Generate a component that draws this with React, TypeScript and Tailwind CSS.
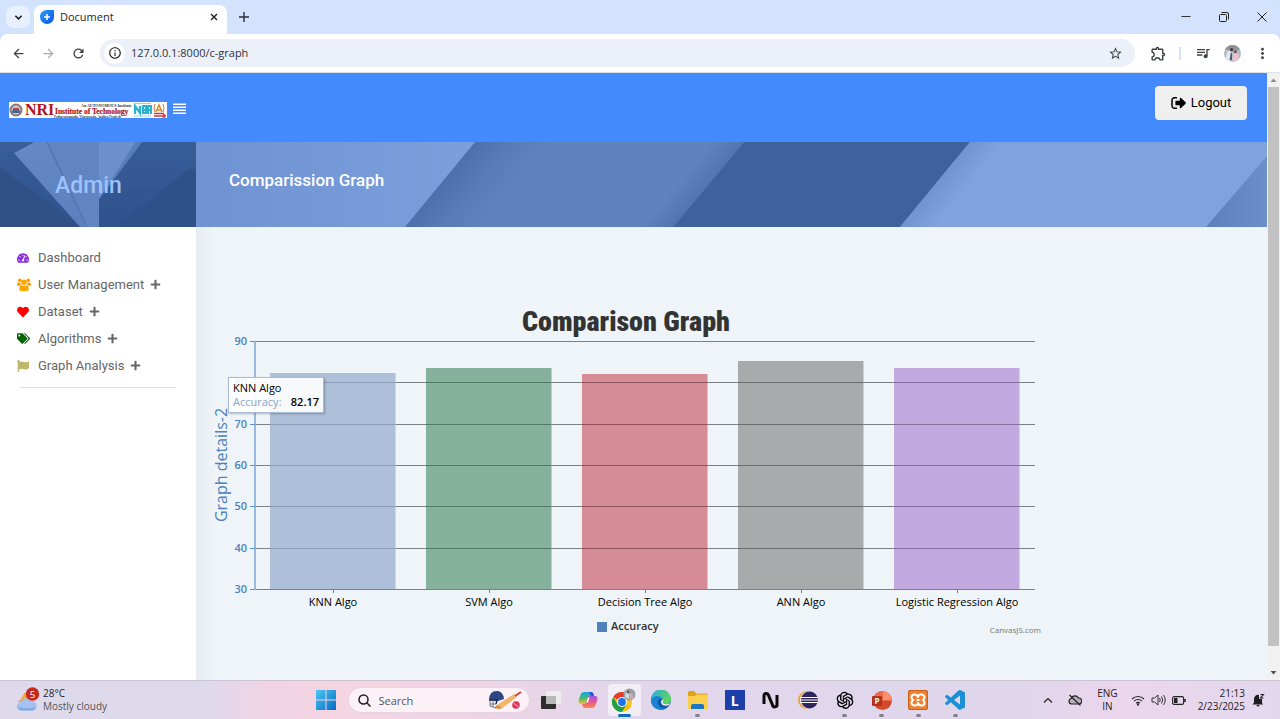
import type { ReactNode } from "react";
import {
  FaFlag,
  FaHeart,
  FaPlus,
  FaTachometerAlt,
  FaTags,
} from "react-icons/fa";
import {
  MdArrowBack,
  MdArrowForward,
  MdOutlineExtension,
  MdMoreVert,
  MdOutlineInfo,
  MdOutlineQueueMusic,
  MdRefresh,
  MdStarBorder,
} from "react-icons/md";
import { AiOutlineOpenAI } from "react-icons/ai";
import { BiLogoVisualStudio } from "react-icons/bi";

/* ---------- browser window ---------- */

function TabStrip() {
  return (
    <div className="flex h-[34px] shrink-0 items-stretch bg-[#d3e3fd] pl-[6px]">
      <button aria-label="Search tabs" className="mt-[6px] flex h-[22px] w-[24px] items-center justify-center rounded-lg bg-[#e9f0fd]">
        <svg viewBox="0 0 10 10" className="h-[9px] w-[9px]" fill="none" stroke="#1f1f1f" strokeWidth="1.8">
          <path d="M1.5 3 5 6.5 8.5 3" />
        </svg>
      </button>
      <div className="ml-1 mt-[5px] flex w-[193px] items-center rounded-t-lg bg-white pb-[5px] pl-[6px] pr-[9px]">
        <svg viewBox="0 0 14 14" className="h-[14px] w-[14px]">
          <defs>
            <linearGradient id="fav" x1="0" y1="0" x2="1" y2="1">
              <stop offset="0" stopColor="#35a0fb" />
              <stop offset="0.5" stopColor="#1877f2" />
              <stop offset="1" stopColor="#0b54d8" />
            </linearGradient>
          </defs>
          <path d="M6 0H14V7A7 7 0 0 1 7 14A7 7 0 0 1 0 7A6.500 6.500 0 0 1 6 0Z" fill="url(#fav)" />
          <path d="M7 4v6M4 7h6" stroke="#fff" strokeWidth="1.6" />
        </svg>
        <span className="ml-[6px] flex-1 text-[11px] text-[#1f1f1f]">Document</span>
        <button aria-label="Close tab">
          <svg viewBox="0 0 8 8" className="h-[8px] w-[8px]" stroke="#1f1f1f" strokeWidth="1.4">
            <path d="M1 1l6 6M7 1l-6 6" />
          </svg>
        </button>
      </div>
      <button aria-label="New tab" className="ml-[12px]">
        <svg viewBox="0 0 10 10" className="h-[10px] w-[10px]" stroke="#2b2f33" strokeWidth="1.4">
          <path d="M5 0v10M0 5h10" />
        </svg>
      </button>
      <div className="ml-auto flex items-center gap-[28px] pr-[13px]">
        <button aria-label="Minimize">
          <svg viewBox="0 0 10 10" className="h-[10px] w-[10px]" stroke="#333" fill="none">
            <path d="M0.5 4.5h9" />
          </svg>
        </button>
        <button aria-label="Restore">
          <svg viewBox="0 0 10 10" className="h-[10px] w-[10px]" stroke="#222" fill="none">
            <rect x="0.5" y="2.5" width="7" height="7" rx="1" />
            <path d="M2.5 0.5H8a1.5 1.5 0 0 1 1.5 1.5v5.500" />
          </svg>
        </button>
        <button aria-label="Close window">
          <svg viewBox="0 0 10 10" className="h-[10px] w-[10px]" stroke="#222">
            <path d="M0.500 0.500l9 9M9.500 0.500l-9 9" />
          </svg>
        </button>
      </div>
    </div>
  );
}

function Toolbar() {
  return (
    <div className="shrink-0 bg-[#d3e3fd]">
      <div className="flex h-[39px] items-center rounded-t-lg border-b border-[#dfe3e8] bg-white pl-[11px] pr-[9px] text-[#3c4043]">
        <button aria-label="Back"><MdArrowBack className="h-[15px] w-[15px]" /></button>
        <button aria-label="Forward" className="ml-[15px] text-[#a8abae]"><MdArrowForward className="h-[15px] w-[15px]" /></button>
        <button aria-label="Reload" className="ml-[15px]"><MdRefresh className="h-[15px] w-[15px]" /></button>
        <div className="ml-[14px] flex h-[28px] flex-1 items-center rounded-full bg-[#ebf0f9] pl-[4px] pr-[12px]">
          <button aria-label="Site information" className="flex h-[21px] w-[21px] items-center justify-center rounded-full bg-white text-[#1f1f1f]">
            <MdOutlineInfo className="h-[14px] w-[14px]" />
          </button>
          <input
            aria-label="Address"
            defaultValue="127.0.0.1:8000/c-graph"
            className="ml-[6px] min-w-0 flex-1 bg-transparent text-[11px] text-[#303337] outline-none"
          />
          <button aria-label="Bookmark this page"><MdStarBorder className="h-[15px] w-[15px]" /></button>
        </div>
        <button aria-label="Extensions" className="ml-[15px]"><MdOutlineExtension className="h-[17px] w-[17px]" /></button>
        <span className="ml-[12px] h-[13px] w-[2px] bg-[#d3e3fd]" />
        <button aria-label="Media" className="ml-[14px]"><MdOutlineQueueMusic className="h-[16px] w-[16px]" /></button>
        <button aria-label="Profile" className="ml-[13px]">
          <svg viewBox="0 0 18 18" className="h-[17px] w-[17px]">
            <clipPath id="avatar"><circle cx="9" cy="9" r="9" /></clipPath>
            <g clipPath="url(#avatar)">
              <rect width="18" height="18" fill="#b4bac4" />
              <path d="M0 0h18v5H0z" fill="#8b8f98" />
              <path d="M4 6l4 1 1 7-5 5H0z" fill="#e3e8f0" />
              <circle cx="8" cy="5" r="1.800" fill="#4a3b3a" />
              <path d="M7 9l1.500-1v8H6z" fill="#4a5570" />
              <circle cx="12" cy="7" r="1.700" fill="#6b5552" />
              <path d="M10 9h5l2 9H9z" fill="#edc0cf" />
            </g>
          </svg>
        </button>
        <button aria-label="Menu" className="ml-[13px]"><MdMoreVert className="h-[17px] w-[17px]" /></button>
      </div>
    </div>
  );
}

/* ---------- admin page ---------- */

function CollegeLogo() {
  return (
    <svg viewBox="0 0 158 16" className="h-[16px] w-[158px]" role="img" aria-label="NRI Institute of Technology">
      <rect width="158" height="16" fill="#fff" />
      <circle cx="7" cy="8" r="6.500" fill="#8d7770" />
      <circle cx="7" cy="8" r="4.500" fill="#c3cbd0" />
      <path d="M3 9q4-5 8 0v2H3z" fill="#45698f" />
      <path d="M4 6h6v2H4z" fill="#c8403b" />
      <g fontFamily="Liberation Serif, serif" fontWeight="bold">
        <text x="16" y="13" fontSize="16" fill="#b3131b">NRI</text>
        <text x="46" y="12" fontSize="7.500" fill="#b3131b" stroke="#b3131b" strokeWidth="0.200">Institute of Technology</text>
        <text x="72" y="4.500" fontSize="4" fill="#333">An AUTONOMOUS Institute</text>
        <text x="45" y="15.500" fontSize="3.300" fill="#333">Pothavarappadu, Vijayawada, Andhra Pradesh</text>
      </g>
      <rect x="124" y="1" width="19" height="14" fill="#fff" />
      <g fill="none" stroke="#29b3d2" strokeWidth="2.200">
        <path d="M126 12V4l5 7V4M134 3v8h3V8h-3V4h3v4M139 12V4h3v8M139 8h3" />
      </g>
      <path d="M125 1.500h17M125 14h17" stroke="#8fd5e5" />
      <rect x="144" y="0" width="14" height="16" fill="#fff" />
      <path d="M147 10l3-7 3 7M148 8h4" fill="none" stroke="#d98b2b" strokeWidth="1.500" />
      <path d="M146 2q-2 4 0 8M154 2q2 4 0 8" fill="none" stroke="#dc6c45" />
      <path d="M145 11.500h10M145 14h8" stroke="#cc3a3a" strokeWidth="1.500" />
      <circle cx="155" cy="14" r="2" fill="#dc4646" />
    </svg>
  );
}

function LogoutIcon() {
  return (
    <svg viewBox="0 0 15 14" className="h-[14px] w-[15px]">
      <path d="M6 1.800H3.500A2.500 2.500 0 0 0 1 4.300v5.400a2.500 2.500 0 0 0 2.500 2.500H6" fill="none" stroke="#000" strokeWidth="1.500" />
      <path d="M5 4.800h3.800V2.300q.3-.9 1.200-.2l4.600 4.200q.5.700 0 1.400L10 11.900q-.9.700-1.200-.2V9.200H5q-.6 0-.6-.6V5.400q0-.6.600-.6z" fill="#000" />
    </svg>
  );
}

function UsersIcon() {
  return (
    <svg viewBox="0 0 14 13" className="h-[13px] w-[14px]" fill="#ffa500">
      <circle cx="2.800" cy="2.400" r="1.900" />
      <circle cx="11.200" cy="2.400" r="1.900" />
      <circle cx="7" cy="4.300" r="2.700" />
      <path d="M0 7V5.500Q.3 4.300 1.200 4.600q1.300.7 2.600.3 0 1 .6 1.900-1.300.1-2.200 1.200H1.200Q0 8 0 7z" />
      <path d="M14 7V5.500q-.3-1.200-1.200-.9-1.300.7-2.600.3 0 1-.6 1.900 1.300.1 2.200 1.200h1q1.200 0 1.200-1z" />
      <path d="M2.200 11q0-4 2.600-3.800Q7 8.800 9.200 7.200 11.800 7 11.800 11q0 2-2 2H4.200q-2 0-2-2z" />
    </svg>
  );
}

function PageHeader() {
  return (
    <header className="flex h-[69px] shrink-0 items-start justify-between bg-[#448aff] pl-[9px] pr-[20px] font-['Roboto',sans-serif]">
      <div className="flex h-[73px] items-center gap-[6px]">
        <CollegeLogo />
        <button aria-label="Toggle menu">
          <svg viewBox="0 0 13 13" className="h-[13px] w-[13px]" stroke="#fff" strokeWidth="1.500">
            <path d="M0 1.200h13M0 4.200h13M0 7.200h13M0 10.200h13" />
          </svg>
        </button>
      </div>
      <button className="mt-[13px] flex h-[34px] w-[92px] items-center justify-center gap-[5px] rounded bg-[#efefef] text-[13px] text-black">
        <LogoutIcon />
        Logout
      </button>
    </header>
  );
}

type MenuItem = { label: string; icon: ReactNode; expandable: boolean };

const menu: MenuItem[] = [
  { label: "Dashboard", icon: <FaTachometerAlt className="h-[12px] w-[12px] text-[#8a2be2]" />, expandable: false },
  { label: "User Management", icon: <UsersIcon />, expandable: true },
  { label: "Dataset", icon: <FaHeart className="h-[12px] w-[12px] text-[#ff0000]" />, expandable: true },
  { label: "Algorithms", icon: <FaTags className="h-[13px] w-[13px] text-[#006400]" />, expandable: true },
  { label: "Graph Analysis", icon: <FaFlag className="h-[12px] w-[12px] text-[#bdb76b]" />, expandable: true },
];

function Sidebar() {
  return (
    <aside className="w-[196px] shrink-0 bg-white font-['Roboto',sans-serif]">
      <div className="relative h-[85px] overflow-hidden bg-[#355891]">
        <svg viewBox="0 0 196 85" preserveAspectRatio="none" className="absolute inset-0 h-full w-full" aria-hidden="true">
          <defs>
            <linearGradient id="sideBase" x1="0" y1="0" x2="0" y2="1">
              <stop offset="0" stopColor="#375d99" />
              <stop offset="1" stopColor="#2e528c" />
            </linearGradient>
            <linearGradient id="sideRay" x1="0" y1="0" x2="0" y2="1">
              <stop offset="0" stopColor="#6489c4" />
              <stop offset="1" stopColor="#5b80bd" />
            </linearGradient>
          </defs>
          <rect width="196" height="85" fill="url(#sideBase)" />
          <path d="M0 25 80 85H0Z" fill="#305086" />
          <path d="M14 11 34 0H142L99 57V85H80Z" fill="url(#sideRay)" />
          <path d="M47 0H99V85H87Z" fill="#6085c1" />
          <path d="M99 0H135L99 57Z" fill="#6b90cb" />
          <path d="M47 0 87 85" stroke="#5075b0" strokeWidth="1.500" />
          <path d="M142 0 99 57 136 0Z" fill="#587eba" />
          <path d="M14 11 34 0H0V8Z" fill="#3b5e98" />
          <path d="M115 85 190 26 196 30V85Z" fill="#2e5189" />
        </svg>
        <div className="relative flex h-full items-center pl-[55px] pt-[3px] text-[23px] font-medium text-[#9dc2ff]">Admin</div>
      </div>
      <nav className="pl-[17px] pr-[20px] pt-[17px]">
        <ul>
          {menu.map((item) => (
            <li key={item.label}>
              <a href="#" className="flex h-[27px] items-center text-[13px] text-[#666]">
                <span className="flex w-[21px] items-center">{item.icon}</span>
                {item.label}
                {item.expandable && <FaPlus className="ml-[6px] h-[11px] w-[11px]" />}
              </a>
            </li>
          ))}
        </ul>
        <hr className="ml-[3px] mt-[8px] border-[#dde2e6]" />
      </nav>
    </aside>
  );
}

function Banner() {
  return (
    <div className="relative h-[85px] overflow-hidden font-['Roboto',sans-serif]">
      <svg viewBox="0 0 1071 85" preserveAspectRatio="none" className="absolute inset-0 h-full w-full" aria-hidden="true">
        <defs>
          <linearGradient id="b1">
            <stop offset="0" stopColor="#6f92d2" />
            <stop offset="0.250" stopColor="#7b9fdb" />
          </linearGradient>
          <linearGradient id="b2" gradientUnits="userSpaceOnUse" x1="244" y1="42" x2="290" y2="80">
            <stop offset="0" stopColor="#4b70ab" />
            <stop offset="0.500" stopColor="#597cb7" />
            <stop offset="1" stopColor="#5f83bd" />
          </linearGradient>
          <linearGradient id="b3" gradientUnits="userSpaceOnUse" x1="739" y1="42" x2="760" y2="59">
            <stop offset="0" stopColor="#7094d0" />
            <stop offset="1" stopColor="#80a3df" />
          </linearGradient>
          <linearGradient id="b4">
            <stop offset="0" stopColor="#5b80bc" />
            <stop offset="1" stopColor="#6b8fca" />
          </linearGradient>
          <linearGradient id="edge" gradientUnits="userSpaceOnUse" x1="494" y1="26" x2="513" y2="42">
            <stop offset="0" stopColor="#4a6ca8" stopOpacity="0" />
            <stop offset="1" stopColor="#4a6ca8" stopOpacity="0.600" />
          </linearGradient>
        </defs>
        <rect width="1071" height="85" fill="url(#b1)" />
        <path d="M279 0H548L477 85H209Z" fill="url(#b2)" />
        <path d="M510 0H548L477 85H439Z" fill="url(#edge)" />
        <path d="M548 0H774L704 85H477Z" fill="#3e629c" />
        <path d="M774 0H1071V85H704Z" fill="url(#b3)" />
        <path d="M1071 14V85H1010Z" fill="url(#b4)" />
      </svg>
      <h1 className="relative pl-[33px] pt-[26px] text-[17px] font-medium leading-[24px] text-white">Comparission Graph</h1>
    </div>
  );
}

type Bar = { label: string; value: number; fill: string; line: string };

const bars: Bar[] = [
  { label: "KNN Algo", value: 82.17, fill: "#aebfd9", line: "#8d9db8" },
  { label: "SVM Algo", value: 83.4, fill: "#86b29d", line: "#4f7d67" },
  { label: "Decision Tree Algo", value: 82.1, fill: "#d58c97", line: "#8f525c" },
  { label: "ANN Algo", value: 85.2, fill: "#a7abab", line: "#6a6e6e" },
  { label: "Logistic Regression Algo", value: 83.4, fill: "#c2aae0", line: "#85709f" },
];

const ticks = [90, 80, 70, 60, 50, 40, 30];
const BASE = 289;
const PLOT_HEIGHT = 248;
const yOf = (v: number) => Math.round(BASE - ((v - 30) * PLOT_HEIGHT) / 60);

function ComparisonChart() {
  return (
    <svg viewBox="0 0 844 340" className="block w-full max-w-[844px] font-['Open_Sans',sans-serif]" role="img" aria-label="Comparison Graph">
      <text x="420" y="31" textAnchor="middle" fontSize="28" fontWeight="900" fill="#333" className="font-['Impact','Roboto_Condensed','Roboto',sans-serif]">
        Comparison Graph
      </text>
      {ticks.map((t) => (
        <g key={t}>
          <path d={`M49 ${yOf(t) + 0.5}H829`} stroke="#7c8184" />
          <path d={`M44 ${yOf(t) + 0.5}h5`} stroke="#5b8fcc" />
          <text x="41" y={yOf(t) + 4} textAnchor="end" fontSize="11" fontWeight="600" fill="#4f81bc">{t}</text>
        </g>
      ))}
      {bars.map((b, i) => {
        const x = 64 + i * 156;
        return (
          <g key={b.label}>
            <rect x={x} y={yOf(b.value)} width="125.500" height={BASE - yOf(b.value)} fill={b.fill} />
            {ticks.filter((t) => t < b.value && t > 30).map((t) => (
              <path key={t} d={`M${x} ${yOf(t) + 0.5}h125.500`} stroke={b.line} />
            ))}
            <path d={`M${x + 63.5} ${BASE}v4`} stroke="#7c8184" />
            <text x={x + 63} y="306" textAnchor="middle" fontSize="11" fontWeight="500" fill="#000">{b.label}</text>
          </g>
        );
      })}
      <path d="M49 41V290" stroke="#7ba6d8" strokeWidth="1.500" />
      <text transform="translate(21 165) rotate(-90)" textAnchor="middle" fontSize="16" fill="#4f81bc">Graph details-2</text>
      <rect x="391" y="322" width="10" height="10" fill="#4f81bc" />
      <text x="405" y="330" fontSize="11" fontWeight="600" fill="#333">Accuracy</text>
      <text x="835" y="333" textAnchor="end" fontSize="8" fill="#777">CanvasJS.com</text>
    </svg>
  );
}

function ChartArea() {
  return (
    <main className="flex-1 bg-gradient-to-r from-[#e7edf0] to-[#eef4f7] to-[20px] pl-[10px] pt-[73px]">
      <div className="relative">
        <ComparisonChart />
        <div className="absolute left-[22px] top-[77px] w-[96px] border border-[#a9bbd6] bg-white/90 px-[4px] py-[3px] font-['Open_Sans',sans-serif] text-[11px] leading-[14px] text-black shadow-[1px_1px_2px_rgba(0,0,0,0.25)]">
          <div className="font-medium">KNN Algo</div>
          <div className="flex justify-between">
            <span className="text-[#8ba3c9]">Accuracy:</span>
            <span className="font-semibold">82.17</span>
          </div>
        </div>
      </div>
    </main>
  );
}

function PageScrollbar() {
  return (
    <div className="flex w-[13px] shrink-0 flex-col items-center bg-[#f1f1f1]" aria-hidden="true">
      <svg viewBox="0 0 13 14" className="h-[14px] w-[13px]"><path d="M3.500 9h6L6.500 5.500z" fill="#8b8b8b" /></svg>
      <div className="w-[11px] flex-1 bg-[#c1c1c1]" />
      <div className="h-[20px]" />
      <svg viewBox="0 0 13 14" className="h-[14px] w-[13px]"><path d="M3.500 5h6L6.500 8.500z" fill="#505050" /></svg>
    </div>
  );
}

/* ---------- taskbar ---------- */

function Chrome() {
  return (
    <svg viewBox="0 0 26 24" className="h-[24px] w-[26px]">
      <circle cx="11" cy="14" r="10" fill="#fbc116" />
      <path d="M11 14 2.300 9A10 10 0 0 1 19.700 9H11z" fill="#e33b2e" />
      <path d="M2.300 9A10 10 0 0 0 11 24L15.500 16.500 11 14 6.700 16.500z" fill="#229f4b" />
      <circle cx="11" cy="14" r="5" fill="#fff" />
      <circle cx="11" cy="14" r="3.900" fill="#1a73e8" />
      <circle cx="18.500" cy="6.500" r="6" fill="#9b9ea3" />
      <path d="M15 3l3 1 0 7-4-2z" fill="#d7dae0" />
      <path d="M18 5l3 0 2 5-4 2z" fill="#c9acb4" />
      <circle cx="17" cy="4" r="1.500" fill="#605a58" />
    </svg>
  );
}

function Copilot() {
  return (
    <svg viewBox="0 0 20 18" className="h-[18px] w-[20px]">
      <defs>
        <linearGradient id="cpA" x1="0" y1="0" x2="0" y2="1">
          <stop offset="0" stopColor="#1aa3ea" />
          <stop offset="0.500" stopColor="#42b86f" />
          <stop offset="1" stopColor="#f2c230" />
        </linearGradient>
        <linearGradient id="cpB" x1="0" y1="0" x2="0" y2="1">
          <stop offset="0" stopColor="#9a55e8" />
          <stop offset="0.500" stopColor="#e8568f" />
          <stop offset="1" stopColor="#f88b45" />
        </linearGradient>
      </defs>
      <path d="M6 1h7q2 0 2.500 2L16 5h-2q-2 0-2.600 2L9.500 13H3Q0 13 .7 9L2.500 4Q3.500 1 6 1z" fill="url(#cpA)" />
      <path d="M14 17H7q-2 0-2.500-2L4 13h2q2 0 2.600-2L10.500 5H17q3 0 2.300 4L17.500 14Q16.500 17 14 17z" fill="url(#cpB)" />
      <path d="M11 1h2q2 0 2.500 2L16 5h-3z" fill="#2457d6" />
      <path d="M9.800 6.500h1.800L10 11.500H8.400z" fill="#fff" />
    </svg>
  );
}

function Edge() {
  return (
    <svg viewBox="0 0 20 20" className="h-[20px] w-[20px]">
      <defs>
        <linearGradient id="edA" x1="0" y1="0" x2="1" y2="0.400">
          <stop offset="0" stopColor="#28a9e8" />
          <stop offset="1" stopColor="#5bd65a" />
        </linearGradient>
      </defs>
      <circle cx="10" cy="10" r="10" fill="#1267b7" />
      <path d="M0 10A10 10 0 0 1 20 9c0 3-2 5-5 5-3 0-4-1-3-3 0-4-7-6-12-1z" fill="url(#edA)" />
      <path d="M0 10C2 5 9 5 12 9 7 7 5 12 8 16c2 3 6 3 9 1A10 10 0 0 1 0 10z" fill="#1a83d4" />
      <path d="M12 9.500c-3 0-4 3-2 5s5 2 8 0c-1 2-5 4-8 2-4-2-4-7 2-7z" fill="#154f95" />
      <path d="M12 9c1 2-1 3 0 4 2 2 6 1 7 0l-1 2c-4 2-8 0-8-3 0-1 1-2 2-3z" fill="#eaf0fa" />
    </svg>
  );
}

function Explorer() {
  return (
    <svg viewBox="0 0 20 18" className="h-[18px] w-[20px]">
      <path d="M0 1.500Q0 0 1.500 0H6L8.500 2.500H18.500Q20 2.500 20 4V8H0z" fill="#e3a11b" />
      <path d="M0 5H7L9 3.500H20V16.500Q20 18 18.500 18H1.500Q0 18 0 16.500z" fill="#fccf4c" />
      <path d="M3 18V15q0-2 2-2h9q2 0 2 2v3z" fill="#1c76c4" />
    </svg>
  );
}

function Eclipse() {
  return (
    <svg viewBox="0 0 20 18" className="h-[18px] w-[20px]">
      <circle cx="9" cy="9" r="9" fill="#f4a12d" />
      <circle cx="11" cy="9" r="9" fill="#e0d6ec" />
      <circle cx="11.500" cy="9" r="8.500" fill="#2f2360" />
      <path d="M2 6.500h18M2 9h18M2 11.500h18" stroke="#fff" strokeWidth="1.200" />
    </svg>
  );
}

function PowerPoint() {
  return (
    <svg viewBox="0 0 20 19" className="h-[19px] w-[20px]">
      <circle cx="10.500" cy="9.500" r="9.500" fill="#d3492b" />
      <path d="M10.500 0A9.500 9.500 0 0 1 20 9.500H10.500z" fill="#ff8f6b" />
      <path d="M10.500 0v9.500H1A9.500 9.500 0 0 1 10.500 0z" fill="#ed6c47" />
      <rect y="5" width="10" height="10" rx="1" fill="#b7321a" />
      <text x="2.500" y="12.800" fontSize="8" fontWeight="bold" fill="#fff" fontFamily="Open Sans, sans-serif">P</text>
    </svg>
  );
}

function Xampp() {
  return (
    <svg viewBox="0 0 20 20" className="h-[20px] w-[20px]">
      <rect width="20" height="20" rx="2" fill="#c9601c" />
      <rect x="1" y="1" width="18" height="18" rx="2" fill="#f0812e" />
      <path
        d="M10 7.500Q9.500 4.500 6.500 4.500T3.500 7Q3.500 9 5 10 3.500 11 3.500 13t3 2.500T10 12.500q.5 3 3.500 3t3-2.500q0-2-1.500-3 1.500-1 1.500-3t-3-2.500T10 7.500z"
        fill="none"
        stroke="#fff"
        strokeWidth="2"
      />
      <path d="M8.500 10h3" stroke="#fff" strokeWidth="2" />
    </svg>
  );
}

type App = { name: string; icon: ReactNode; state?: "open" | "active" };

const apps: App[] = [
  {
    name: "Task view",
    icon: (
      <svg viewBox="0 0 20 18" className="h-[18px] w-[20px]">
        <rect x="0" y="5" width="15" height="13" rx="1" fill="#2e2e2e" />
        <rect x="5" y="0" width="15" height="13" rx="1" fill="#ededed" />
        <rect x="5" y="5" width="10" height="8" fill="#b9b9b9" />
      </svg>
    ),
  },
  { name: "Copilot", icon: <Copilot /> },
  { name: "Chrome", icon: <Chrome />, state: "active" },
  { name: "Edge", icon: <Edge /> },
  { name: "File Explorer", icon: <Explorer />, state: "open" },
  {
    name: "L",
    icon: <span className="flex h-[20px] w-[20px] items-center justify-center bg-[#1c3faa] text-[14px] font-bold text-white">L</span>,
  },
  {
    name: "N",
    icon: (
      <svg viewBox="0 0 18 18" className="h-[18px] w-[18px]" fill="none" stroke="#0b0b0b" strokeWidth="3">
        <path d="M2 13V4.500a2.200 2.200 0 0 1 4.200-.800L10.500 14a2.200 2.200 0 0 0 4.500-.800V4" />
      </svg>
    ),
  },
  { name: "Eclipse", icon: <Eclipse /> },
  { name: "ChatGPT", icon: <AiOutlineOpenAI className="h-[22px] w-[22px] text-black" />, state: "open" },
  { name: "PowerPoint", icon: <PowerPoint />, state: "open" },
  { name: "XAMPP", icon: <Xampp />, state: "open" },
  { name: "Visual Studio Code", icon: <BiLogoVisualStudio className="h-[24px] w-[24px] text-[#1c8fd6]" />, state: "open" },
];

function SearchArt() {
  return (
    <svg viewBox="0 0 34 20" className="h-[20px] w-[34px]">
      <path d="M1 10Q1 1 9 1q6 0 7 8l-6 2z" fill="#2d4583" />
      <path d="M1 10h8l-1 4" stroke="#182b5c" fill="none" strokeWidth="1.500" />
      <path d="M2 11v5l6 2M2 14h6M5 11v6" stroke="#777" fill="none" />
      <path d="M9 15 26 4l3 3L13 19z" fill="#eeb56b" />
      <path d="M9 15 6 18l5 1 3-1z" fill="#d58b43" />
      <path d="M27 6l6-4" stroke="#c2483a" strokeWidth="2" />
      <circle cx="28" cy="15" r="3.800" fill="#dd3557" />
      <path d="M25.500 13l5 4" stroke="#f6c4cf" />
    </svg>
  );
}

function Taskbar() {
  return (
    <footer className="flex h-[39px] shrink-0 items-center border-t border-[#c9c3d2] bg-[linear-gradient(90deg,#dfd9ec_0%,#dfd9ec_16%,#f1d3e4_21%,#f5d5e2_27%,#efd4e4_36%,#e2d6ea_48%,#e1d6ec_62%,#e0d6ec_80%,#ecd6ec_88%,#e2d8ee_100%)] font-['Open_Sans',sans-serif] text-[10px] leading-[13px] text-[#333]">
      <div className="flex flex-1 items-center gap-[3px] pl-[16px]">
        <svg viewBox="0 0 24 26" className="h-[26px] w-[24px]">
          <path d="M9 5l3 4 3 6H7L1 15l4-3z" fill="#f4a838" />
          <path d="M5 24a4.500 4.500 0 0 1 .5-9 5.500 5.500 0 0 1 10-1 5 5 0 0 1 .5 10z" fill="#a4c2ef" />
          <path d="M5 23a4 4 0 0 1-3-3q8 3 18 0-1 3-4 3z" fill="#7ea5de" />
          <circle cx="16.500" cy="7" r="6.700" fill="#c42b1c" />
          <text x="16.500" y="10.500" textAnchor="middle" fontSize="9.500" fill="#fff">5</text>
        </svg>
        <div>
          <div className="text-[#1f1f1f]">28°C</div>
          <div className="text-[#555]">Mostly cloudy</div>
        </div>
      </div>

      <div className="flex h-full items-center gap-[3px]">
        <button aria-label="Start" className="flex w-[37px] justify-center">
          <svg viewBox="0 0 20 20" className="h-[20px] w-[20px]">
            <defs>
              <linearGradient id="win" x1="0" y1="0" x2="1" y2="1">
                <stop offset="0" stopColor="#4cc8f3" />
                <stop offset="1" stopColor="#0569c4" />
              </linearGradient>
            </defs>
            <path d="M0 0h9.500v9.500H0zM10.500 0H20v9.500h-9.500zM0 10.500h9.500V20H0zM10.500 10.500H20V20h-9.500z" fill="url(#win)" />
          </svg>
        </button>
        <label className="flex h-[26px] w-[182px] items-center rounded-full border border-[#e6d4e2] bg-[#fbf1f7] pl-[9px] pr-[7px]">
          <svg viewBox="0 0 13 13" className="h-[13px] w-[13px] shrink-0" fill="none" stroke="#1f1f1f" strokeWidth="1.500">
            <circle cx="5.500" cy="5.500" r="4.500" />
            <path d="M8.800 8.800 12.500 12.500" />
          </svg>
          <input
            type="text"
            aria-label="Search"
            placeholder="Search"
            className="ml-[8px] min-w-0 flex-1 bg-transparent text-[11px] outline-none placeholder:text-[#555]"
          />
          <SearchArt />
        </label>
        <div className="grid h-full w-[441px] grid-cols-12">
          {apps.map((app) => (
            <button key={app.name} aria-label={app.name} className="relative flex h-full items-center justify-center">
              {app.state === "active" && <span className="absolute inset-x-[2px] inset-y-[3px] rounded bg-[#f3edf8]" />}
              <span className="relative">{app.icon}</span>
              {app.state === "open" && <span className="absolute bottom-[2px] h-[3px] w-[5px] rounded-full bg-[#85808c]" />}
              {app.state === "active" && <span className="absolute bottom-[2px] h-[3px] w-[13px] rounded-full bg-[#0f6cbd]" />}
            </button>
          ))}
        </div>
      </div>

      <div className="flex flex-1 items-center justify-end pr-[15px] text-[#222]">
        <svg viewBox="0 0 10 6" className="h-[6px] w-[10px]" fill="none" stroke="#222" strokeWidth="1.200">
          <path d="M1 5.500 5 1.500 9 5.500" />
        </svg>
        <svg viewBox="0 0 14 12" className="ml-[15px] h-[12px] w-[14px]" fill="none" stroke="#222" strokeWidth="1.200">
          <path d="M3.500 10a2.800 2.800 0 0 1-.3-5.500A4 4 0 0 1 10.500 4a3 3 0 0 1 .5 6z" fill="#b5b0b9" />
          <path d="M1.500 1 12.500 11.500" />
        </svg>
        <div className="ml-[15px] text-center">
          <div>ENG</div>
          <div>IN</div>
        </div>
        <svg viewBox="0 0 14 11" className="ml-[13px] h-[11px] w-[14px]" fill="none" stroke="#222" strokeWidth="1.100">
          <path d="M1 4a8.500 8.500 0 0 1 12 0M3 6.200a5.700 5.700 0 0 1 8 0M5 8.200a3 3 0 0 1 4 0" />
          <circle cx="7" cy="9.500" r="0.600" fill="#222" />
        </svg>
        <svg viewBox="0 0 15 12" className="ml-[6px] h-[12px] w-[15px]" fill="none" stroke="#333">
          <path d="M1 4h2.500L7 1v10L3.500 8H1zM8.500 4q1.500 2 0 4M10.500 2.500q2.500 3.500 0 7M12.500 1q3.500 5 0 10" />
        </svg>
        <svg viewBox="0 0 14 9" className="ml-[6px] h-[9px] w-[14px]" fill="none" stroke="#222" strokeWidth="1.100">
          <rect x="0.600" y="0.600" width="11" height="7.800" rx="1.500" />
          <path d="M13 3v3" strokeWidth="1.600" />
          <rect x="2" y="2" width="3.500" height="5" fill="#222" stroke="none" />
        </svg>
        <div className="ml-[12px] text-right">
          <div>21:13</div>
          <div>2/23/2025</div>
        </div>
        <svg viewBox="0 0 13 14" className="ml-[7px] h-[14px] w-[13px]">
          <path d="M2 6a4 4 0 0 1 5-4v4h3v4l1 1.500H.5L2 9.500z" fill="#1f1f1f" />
          <path d="M4.500 12h3a1.500 1.500 0 0 1-3 0z" fill="#1f1f1f" />
          <path d="M8.500 1.500h3l-3 3.500h3" fill="none" stroke="#1f1f1f" strokeWidth="1.100" />
        </svg>
      </div>
    </footer>
  );
}

export default function App() {
  return (
    <div className="flex h-screen flex-col overflow-hidden bg-white font-['Open_Sans',sans-serif]">
      <TabStrip />
      <Toolbar />
      <div className="flex min-h-0 flex-1">
        <div className="flex min-w-0 flex-1 flex-col overflow-hidden">
          <PageHeader />
          <div className="flex min-h-0 flex-1">
            <Sidebar />
            <div className="flex min-w-0 flex-1 flex-col">
              <Banner />
              <ChartArea />
            </div>
          </div>
        </div>
        <PageScrollbar />
      </div>
      <Taskbar />
    </div>
  );
}
